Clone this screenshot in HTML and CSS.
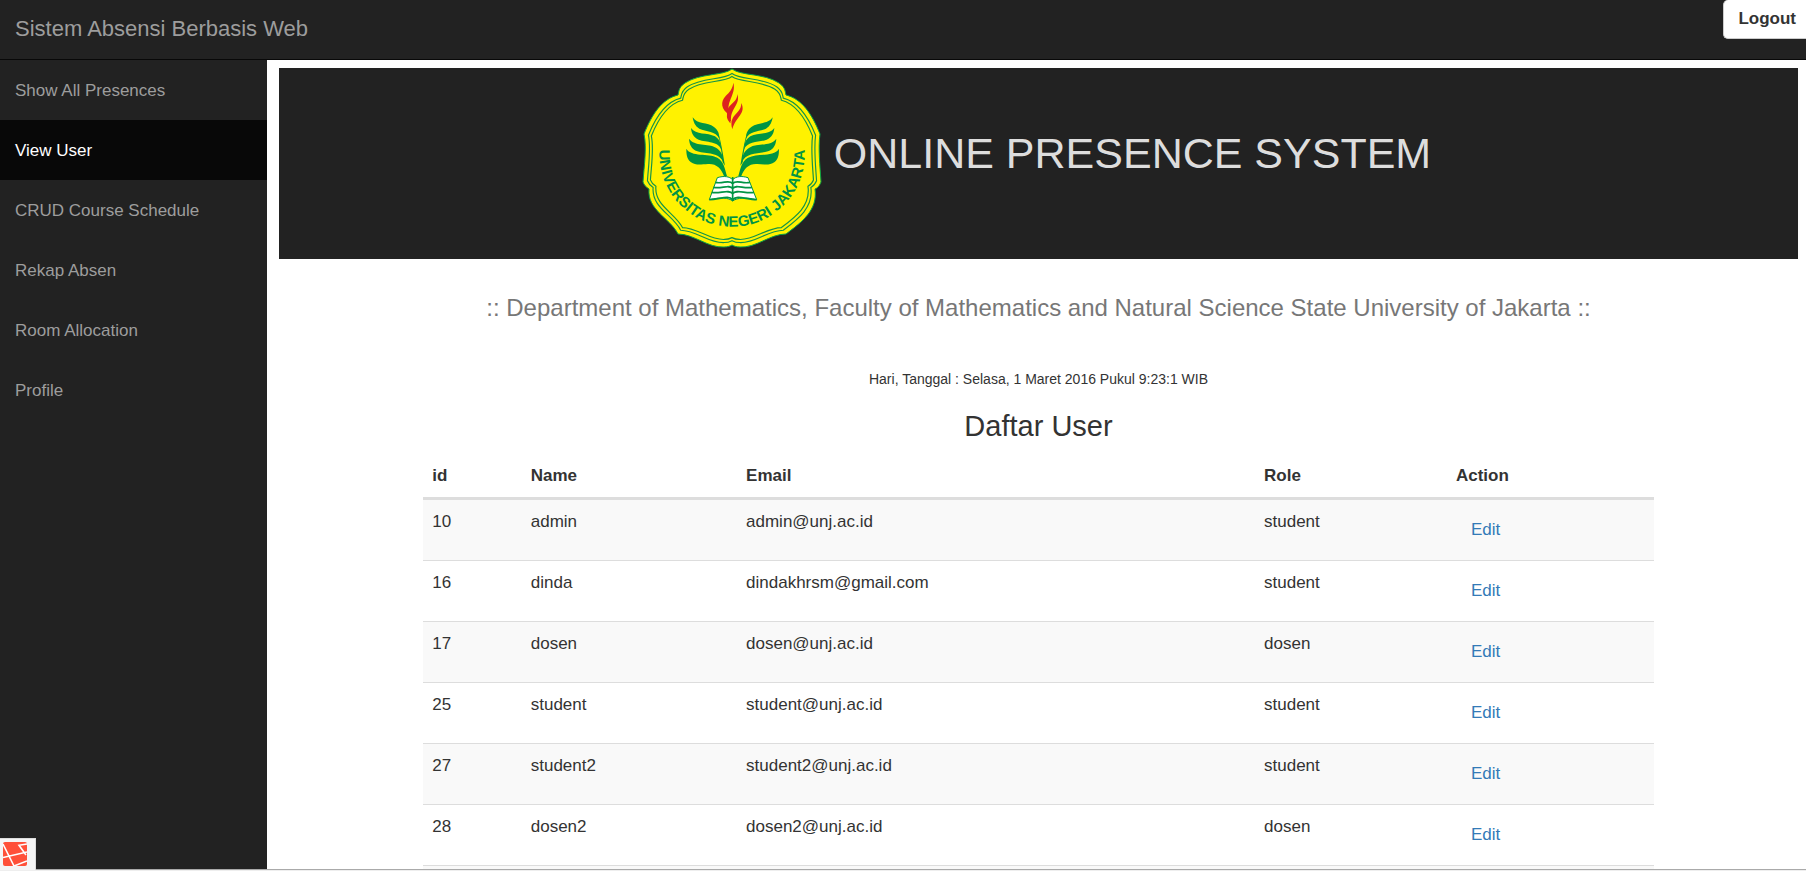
FILE: index.html
```html
<!DOCTYPE html>
<html lang="id">
<head>
<meta charset="utf-8">
<title>Sistem Absensi Berbasis Web</title>
<link rel="stylesheet" href="styles.css">
</head>
<body>
<header class="navbar">
  <a class="brand" href="#">Sistem Absensi Berbasis Web</a>
  <button class="logout" type="button">Logout</button>
</header>
<div class="layout">
  <nav class="sidebar">
    <a class="nav-link" href="#">Show All Presences</a>
    <a class="nav-link active" href="#">View User</a>
    <a class="nav-link" href="#">CRUD Course Schedule</a>
    <a class="nav-link" href="#">Rekap Absen</a>
    <a class="nav-link" href="#">Room Allocation</a>
    <a class="nav-link" href="#">Profile</a>
  </nav>
  <main class="content">
    <div class="banner">
      <svg class="emblem" viewBox="0 0 180 180" role="img" aria-label="Universitas Negeri Jakarta">
        <defs>
          <path id="petals" d="M90 1 C99 8 122 5 137 15 C144 20 143 24 144 27 C160 31 170 46 178 66 C176 80 178 98 179 114 C177 119 175 120 173 121 C176 142 160 154 144 166 C128 166 114 180 98 179 C94 179 92 178 90 177 C88 178 86 179 82 179 C66 180 52 166 36 166 C28 150 5 142 7 121 C4 119 2 117 1 114 C2 98 5 80 2 66 C10 46 20 31 36 27 C37 24 36 20 43 15 C58 5 81 8 90 1Z"/>
          <path id="motto" d="M18 76 A72.7 72.7 0 1 0 162 76"/>
          <g id="wing">
            <path d="M38 127 C52 149 82 141 102 156 C115 165 118 178 118 192 C108 166 78 171 58 161 C45 154 40 140 38 127Z"/>
            <path d="M33 159 C48 181 82 172 105 184 C119 193 123 205 124 224 C114 197 80 203 56 194 C40 187 34 174 33 159Z"/>
            <path d="M27 191 C44 215 84 204 108 218 C124 228 129 240 131 264 C118 230 80 238 52 229 C34 222 28 208 27 191Z"/>
            <path d="M19 221 C34 247 84 233 112 248 C132 260 134 280 141 303 L132 303 C124 280 108 265 84 267 C62 268 48 272 32 261 C20 251 19 236 19 221Z"/>
            <path d="M114 172 C122 195 128 232 135 272 L128 262 C126 232 119 200 114 172Z"/>
          </g>
        </defs>
        <use href="#petals" fill="#fff200" stroke="#08a045" stroke-width="1"/>
        <use href="#petals" fill="none" stroke="#159447" stroke-width="1.2" transform="translate(4.5 4.5) scale(.95)"/>
        <use href="#petals" fill="none" stroke="#159447" stroke-width="1.3" transform="translate(7.5 7.5) scale(.916)"/>
        <g transform="translate(38 7) scale(.3333)">
          <g fill="#dc241f">
            <path d="M160 23 C170 58 134 82 149 120 C122 104 121 79 137 63 C149 51 158 41 160 23Z"/>
            <path d="M172 57 C183 91 147 101 154 142 C133 122 140 99 155 87 C167 77 172 69 172 57Z"/>
            <path d="M184 84 C199 117 167 124 157 163 C149 137 160 124 171 113 C181 103 184 95 184 84Z"/>
            <path d="M142 118 C138 126 144 139 152 145 C149 133 149 126 149 121Z"/>
          </g>
          <use href="#wing" fill="#009444"/>
          <use href="#wing" fill="#009444" transform="matrix(-1 0 0 1 316 0)"/>
          <path fill="#fff" stroke="#009444" stroke-width="3" d="M112 308 C132 302 148 304 158 314 C168 304 184 302 204 308 L230 374 C198 366 172 368 158 378 C146 368 120 366 88 374Z"/>
          <path fill="none" stroke="#009444" stroke-width="5" d="M106 322 C128 328 148 312 158 326 C168 312 188 328 210 322 M100 337 C124 343 148 326 158 341 C168 326 192 343 216 337 M95 352 C120 357 148 341 158 357 C168 341 196 357 222 352 M88 374 C118 374 146 358 158 375 C170 358 198 374 230 374 M158 306V378"/>
        </g>
        <text class="motto" text-anchor="middle"><textPath href="#motto" startOffset="50%">UNIVERSITAS NEGERI JAKARTA</textPath></text>
      </svg>
      <h1 class="title">ONLINE PRESENCE SYSTEM</h1>
    </div>
    <p class="department">:: Department of Mathematics, Faculty of Mathematics and Natural Science State University of Jakarta ::</p>
    <p class="clock">Hari, Tanggal : Selasa, 1 Maret 2016 Pukul 9:23:1 WIB</p>
    <h2 class="section-title">Daftar User</h2>
    <table class="users">
      <colgroup><col class="c-id"><col class="c-name"><col class="c-email"><col class="c-role"><col></colgroup>
      <thead>
        <tr><th>id</th><th>Name</th><th>Email</th><th>Role</th><th>Action</th></tr>
      </thead>
      <tbody>
        <tr><td>10</td><td>admin</td><td>admin@unj.ac.id</td><td>student</td><td><a class="edit" href="#">Edit</a></td></tr>
        <tr><td>16</td><td>dinda</td><td>dindakhrsm@gmail.com</td><td>student</td><td><a class="edit" href="#">Edit</a></td></tr>
        <tr><td>17</td><td>dosen</td><td>dosen@unj.ac.id</td><td>dosen</td><td><a class="edit" href="#">Edit</a></td></tr>
        <tr><td>25</td><td>student</td><td>student@unj.ac.id</td><td>student</td><td><a class="edit" href="#">Edit</a></td></tr>
        <tr><td>27</td><td>student2</td><td>student2@unj.ac.id</td><td>student</td><td><a class="edit" href="#">Edit</a></td></tr>
        <tr><td>28</td><td>dosen2</td><td>dosen2@unj.ac.id</td><td>dosen</td><td><a class="edit" href="#">Edit</a></td></tr>
        <tr><td></td><td></td><td></td><td></td><td></td></tr>
      </tbody>
    </table>
  </main>
</div>
<footer class="debugbar">
  <button class="debug-toggle" type="button" aria-label="Debug bar">
    <svg viewBox="0 0 24 24" width="24" height="24" aria-hidden="true">
      <rect width="24" height="24" rx="2" fill="#ff5039"/>
      <path fill="none" stroke="#fff" stroke-width="1.6" d="M0 2 L11 24 M0 15.500 L24 10 M11 24 L24 19 M24 2 L16 3.300 L23 13"/>
    </svg>
  </button>
</footer>
</body>
</html>
```
FILE: styles.css
```css
* { box-sizing: border-box; }

body {
  display: flex;
  flex-direction: column;
  height: 100vh;
  margin: 0;
  overflow: hidden;
  background: #fff;
  color: #333;
  font: 17px/24px "Liberation Sans", Arial, sans-serif;
}

a { text-decoration: none; }

.navbar {
  display: flex;
  flex: none;
  justify-content: space-between;
  align-items: flex-start;
  height: 60px;
  background: #222;
  border-bottom: 1px solid #080808;
}

.brand {
  padding: 17px 15px;
  color: #9d9d9d;
  font-size: 22px;
}

.logout {
  height: 39px;
  padding: 0 10px 0 14px;
  border: 1px solid #ccc;
  border-width: 0 0 1px 1px;
  border-radius: 5px 0 0 5px;
  background: #fff;
  color: #333;
  font: bold 17px/24px "Liberation Sans", Arial, sans-serif;
}

.layout {
  display: flex;
  flex: 1;
  min-height: 0;
}

.sidebar {
  flex: none;
  width: 267px;
  background: #222;
}

.nav-link {
  display: block;
  padding: 19px 15px 17px;
  color: #9d9d9d;
}

.nav-link.active {
  background: #080808;
  color: #fff;
}

.content {
  flex: 1;
  padding: 8px 8px 0 12px;
  overflow: hidden;
  text-align: center;
}

.banner {
  display: flex;
  justify-content: center;
  gap: 12px;
  height: 191px;
  padding-right: 4px;
  background: #222;
}

.emblem {
  width: 180px;
  height: 180px;
}

.motto {
  fill: #009444;
  font: bold 15px "Liberation Sans", Arial, sans-serif;
}

.title {
  margin: 61px 0 0;
  color: #ddd;
  font-weight: 400;
  font-size: 43px;
  line-height: 48px;
}

.department {
  margin: 34px 0 0;
  color: #777;
  font-size: 24px;
  line-height: 30px;
}

.clock {
  margin: 46px 0 0;
  font-size: 14px;
  line-height: 20px;
}

.section-title {
  margin: 21px 0 0;
  font-weight: 400;
  font-size: 29px;
  line-height: 32px;
}

.users {
  width: 81%;
  margin: 12px auto 0;
  border-collapse: separate;
  border-spacing: 0;
  table-layout: fixed;
  text-align: left;
}

.c-id { width: 8%; }
.c-name { width: 17.5%; }
.c-email { width: 42.1%; }
.c-role { width: 15.6%; }

.users th {
  padding: 10px 9px 9px;
  border-bottom: 3px solid #ddd;
}

.users td {
  height: 61px;
  padding: 10px 9px;
  border-bottom: 1px solid #ddd;
  vertical-align: top;
}

.users tbody tr:nth-child(odd) { background: #f9f9f9; }

.edit {
  display: inline-block;
  padding: 8px 15px;
  color: #337ab7;
}

.debugbar {
  position: fixed;
  right: 0;
  bottom: 0;
  left: 0;
  height: 2px;
  border-top: 1px solid #aaa;
  background: #eee;
}

.debug-toggle {
  position: absolute;
  bottom: 1px;
  left: 0;
  display: flex;
  padding: 3px 8px 4px 3px;
  border: 1px solid #ddd;
  border-width: 1px 1px 0 0;
  background: #f5f5f5;
}
```
